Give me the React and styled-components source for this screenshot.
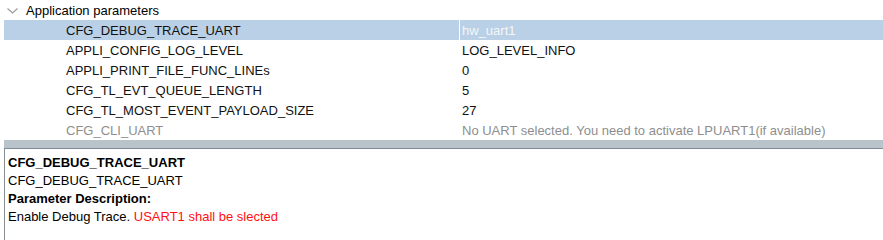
import React from "react";
import styled, { createGlobalStyle } from "styled-components";

const Global = createGlobalStyle`
  html, body { margin: 0; padding: 0; background: #ffffff; }
  body { font-family: "Liberation Sans", Arial, sans-serif; font-size: 13px; }
  #root { width: 883px; height: 240px; overflow: hidden; }
`;

const Page = styled.div`
  width: 883px;
  height: 240px;
  display: flex;
  flex-direction: column;
  padding-left: 4px;
  box-sizing: border-box;
  background: #ffffff;
  color: #000;
  font-family: "Liberation Sans", Arial, sans-serif;
  font-size: 13px;
`;

const Tree = styled.div`
  display: flex;
  flex-direction: column;
  height: 140px;
`;

const GroupHeader = styled.div`
  height: 20px;
  display: flex;
  align-items: center;
  gap: 7px;
  padding-left: 2px;
  color: #000;
`;

const Chevron = styled.svg`
  width: 13px;
  height: 13px;
  flex: none;
`;

const Row = styled.div`
  height: 20px;
  display: grid;
  grid-template-columns: 455px 1fr;
  align-items: stretch;
  background: ${(p) => (p.$selected ? "#b9d0e6" : "transparent")};
  color: ${(p) => (p.$disabled ? "#8e8e8e" : "#111")};
`;

const NameCell = styled.div`
  display: flex;
  align-items: center;
  padding-left: 62px;
  white-space: nowrap;
`;

const ValueCell = styled.div`
  display: flex;
  align-items: center;
  padding-left: 2px;
  white-space: nowrap;
  border-left: 1px solid ${(p) => (p.$selected ? "#ffffff" : "transparent")};
  color: ${(p) => (p.$selected ? "#f4f6f8" : "inherit")};
`;

const Splitter = styled.div`
  height: 8px;
  background: #b9c4ca;
  border-bottom: 1px solid #7e8c97;
`;

const Details = styled.div`
  flex: 1;
  border-left: 1px solid #8a8f94;
  padding: 5px 0 0 3px;
  line-height: 18px;
  color: #000;
`;

const Line = styled.div`
  font-weight: ${(p) => (p.$bold ? 700 : 400)};
  white-space: nowrap;
`;

const Warn = styled.span`
  color: #ff1010;
`;

const params = [
  { name: "CFG_DEBUG_TRACE_UART", value: "hw_uart1", selected: true },
  { name: "APPLI_CONFIG_LOG_LEVEL", value: "LOG_LEVEL_INFO" },
  { name: "APPLI_PRINT_FILE_FUNC_LINEs", value: "0" },
  { name: "CFG_TL_EVT_QUEUE_LENGTH", value: "5" },
  { name: "CFG_TL_MOST_EVENT_PAYLOAD_SIZE", value: "27" },
  {
    name: "CFG_CLI_UART",
    value: "No UART selected. You need to activate LPUART1(if available)",
    disabled: true,
  },
];

export default function App() {
  return (
    <>
      <Global />
      <Page>
        <Tree>
          <GroupHeader>
            <Chevron viewBox="0 0 13 13">
              <path d="M1.5 4.5 L6.5 9 L11.5 4.5" fill="none" stroke="#9a9a9a" strokeWidth="1.1" />
            </Chevron>
            Application parameters
          </GroupHeader>
          {params.map((p) => (
            <Row key={p.name} $selected={p.selected} $disabled={p.disabled}>
              <NameCell>{p.name}</NameCell>
              <ValueCell $selected={p.selected}>{p.value}</ValueCell>
            </Row>
          ))}
        </Tree>
        <Splitter />
        <Details>
          <Line $bold>CFG_DEBUG_TRACE_UART</Line>
          <Line>CFG_DEBUG_TRACE_UART</Line>
          <Line $bold>Parameter Description:</Line>
          <Line>
            Enable Debug Trace. <Warn>USART1 shall be slected</Warn>
          </Line>
        </Details>
      </Page>
    </>
  );
}
